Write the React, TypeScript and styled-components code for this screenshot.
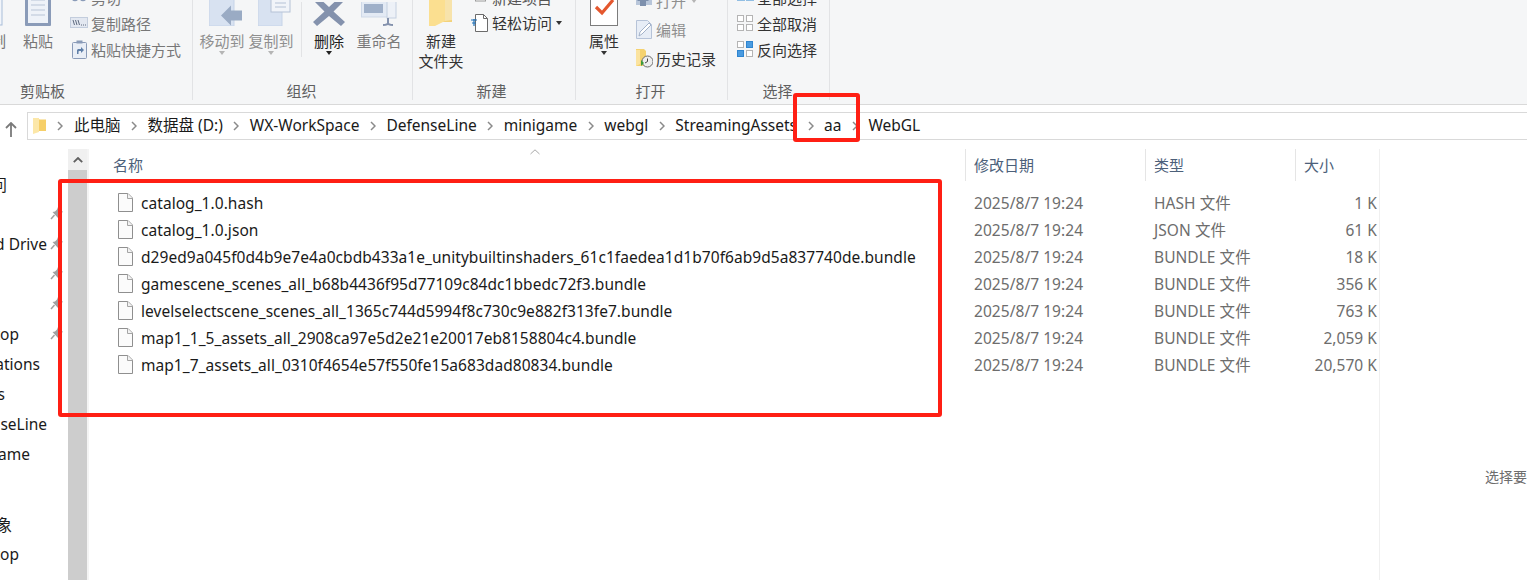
import React from "react";
import styled, { createGlobalStyle } from "styled-components";

const Global = createGlobalStyle`
  html, body { margin: 0; padding: 0; background: #fff; overflow: hidden; }
  body { font-family: "Noto Sans", "Noto Sans CJK SC", sans-serif; }
`;

const Window = styled.div`
  position: relative;
  width: 1527px;
  height: 580px;
  overflow: hidden;
  display: flex;
  flex-direction: column;
  background: #fff;
`;

/* ---------- ribbon ---------- */
const Ribbon = styled.div`
  height: 104px;
  flex: none;
  display: flex;
  align-items: flex-start;
  background: #f5f6f7;
  border-bottom: 1px solid #d9d9d9;
  overflow: hidden;
`;
const Group = styled.section<{ $w: number }>`
  width: ${(p) => p.$w}px;
  height: 100px;
  flex: none;
  box-sizing: border-box;
  display: flex;
  flex-direction: column;
  border-right: 1px solid #e2e3e5;
`;
const GroupBody = styled.div<{ $pad: number }>`
  height: 80px;
  flex: none;
  display: flex;
  align-items: flex-start;
  padding-left: ${(p) => p.$pad}px;
`;
const GroupLabel = styled.div<{ $w: number }>`
  width: ${(p) => p.$w}px;
  height: 20px;
  line-height: 22px;
  text-align: center;
  font-size: 15px;
  color: #5f5f5f;
  white-space: nowrap;
`;
const BigButton = styled.div<{ $w: number; $ml?: number }>`
  width: ${(p) => p.$w}px;
  margin-left: ${(p) => p.$ml ?? 0}px;
  flex: none;
  display: flex;
  flex-direction: column;
  align-items: center;
`;
const BigIcon = styled.div<{ $dx?: number }>`
  height: 26px;
  margin-bottom: 5px;
  margin-left: ${(p) => p.$dx ?? 0}px;
  display: flex;
  align-items: flex-end;
  overflow: hidden;
`;
const BigText = styled.div<{ $tone?: string }>`
  font-size: 15px;
  line-height: 20px;
  text-align: center;
  white-space: nowrap;
  color: ${(p) => p.$tone ?? "#777"};
`;
const Caret = styled.div<{ $tone?: string; $ml?: number }>`
  width: 0;
  height: 0;
  margin-left: ${(p) => p.$ml ?? 0}px;
  border-left: 3.5px solid transparent;
  border-right: 3.5px solid transparent;
  border-top: 4px solid ${(p) => p.$tone ?? "#333"};
`;
const Separator = styled.div`
  width: 1px;
  height: 55px;
  margin: 2px 3px 0 6px;
  flex: none;
  background: #e2e3e5;
`;
const SmallList = styled.div<{ $top: number; $ml?: number }>`
  margin-top: ${(p) => p.$top}px;
  margin-left: ${(p) => p.$ml ?? 0}px;
  display: flex;
  flex-direction: column;
`;
const SmallRow = styled.div<{ $h: number }>`
  height: ${(p) => p.$h}px;
  display: flex;
  align-items: center;
  white-space: nowrap;
`;
const SmallIcon = styled.div`
  width: 20px;
  height: 20px;
  flex: none;
  margin-right: 2px;
  display: flex;
  align-items: center;
  justify-content: center;
`;
const SmallText = styled.span<{ $tone?: string }>`
  font-size: 15px;
  color: ${(p) => p.$tone ?? "#333"};
`;

/* ---------- address bar ---------- */
const AddressBar = styled.div`
  height: 44px;
  flex: none;
  display: flex;
  align-items: flex-start;
  background: #fff;
`;
const UpButton = styled.div`
  width: 22px;
  margin-right: 5px;
  height: 44px;
  flex: none;
  display: flex;
  align-items: center;
  justify-content: center;
  box-sizing: border-box;
  padding-top: 1px;
  margin-top: 2px;
`;
const AddressBox = styled.div`
  flex: 1;
  height: 28px;
  margin-top: 7px;
  box-sizing: border-box;
  border: 1px solid #d9d9d9;
  border-right: none;
  display: flex;
  align-items: center;
  padding-left: 5px;
  font-size: 15.5px;
  color: #1a1a1a;
  white-space: nowrap;
`;
const FolderSlot = styled.div`
  width: 13px;
  height: 16px;
  flex: none;
  margin-right: 8px;
`;
const FirstSep = styled.div`
  width: 12px;
  margin-right: 8px;
  flex: none;
  display: flex;
  align-items: center;
  justify-content: center;
`;
const Crumb = styled.span`
  flex: none;
  line-height: 24px;
  margin-bottom: 2px;
`;
const CrumbSep = styled.div`
  width: 27px;
  flex: none;
  display: flex;
  align-items: center;
  justify-content: center;
`;

/* ---------- body ---------- */
const Body = styled.div`
  flex: 1;
  display: flex;
  min-height: 0;
`;
const Sidebar = styled.nav`
  width: 68px;
  flex: none;
  padding-top: 20px;
  overflow: hidden;
  font-size: 15.5px;
  color: #1a1a1a;
`;
const NavRow = styled.div<{ $h: number }>`
  height: ${(p) => p.$h}px;
  display: flex;
  align-items: center;
  position: relative;
`;
const NavLabel = styled.div<{ $end: number }>`
  width: ${(p) => p.$end}px;
  display: flex;
  justify-content: flex-end;
  overflow: hidden;
  white-space: nowrap;
`;
const NavPin = styled.div`
  position: absolute;
  left: 50px;
  top: 8px;
  width: 13px;
  height: 13px;
`;
const Scrollbar = styled.div`
  width: 19px;
  flex: none;
  display: flex;
  flex-direction: column;
  background: #f0f0f0;
`;
const ScrollButton = styled.div`
  height: 21px;
  flex: none;
  display: flex;
  align-items: center;
  justify-content: center;
`;
const ScrollThumb = styled.div`
  flex: 1;
  background: #cdcdcd;
`;
const FilePane = styled.div`
  width: 1293px;
  flex: none;
  box-sizing: border-box;
  border-left: 2px solid #f4f4f4;
  border-right: 1px solid #f0f0f0;
  position: relative;
`;
const HeaderRow = styled.div`
  display: grid;
  grid-template-columns: 876px 180px 150px 84px;
  height: 32px;
  margin-bottom: 8px;
  font-size: 15px;
  color: #4c607a;
`;
const HeaderCell = styled.div<{ $pad: number; $line?: boolean }>`
  box-sizing: border-box;
  padding-left: ${(p) => p.$pad}px;
  line-height: 32px;
  border-left: ${(p) => (p.$line ? "1px solid #e5e5e5" : "none")};
`;
const SortArrow = styled.div`
  position: absolute;
  left: 441px;
  top: 0;
`;
const FileRow = styled.div`
  display: grid;
  grid-template-columns: 876px 180px 150px 84px;
  height: 27px;
  align-items: center;
  font-size: 15.5px;
  letter-spacing: 0.05px;
`;
const NameCell = styled.div`
  display: flex;
  align-items: center;
  padding-left: 29px;
  color: #1a1a1a;
  white-space: nowrap;
  min-width: 0;
`;
const FileGlyph = styled.div`
  width: 15px;
  height: 19px;
  flex: none;
  margin-right: 8px;
`;
const MetaCell = styled.div<{ $right?: boolean }>`
  box-sizing: border-box;
  padding: ${(p) => (p.$right ? "0 2px 0 0" : "0 0 0 9px")};
  text-align: ${(p) => (p.$right ? "right" : "left")};
  color: #6d6d6d;
  white-space: nowrap;
`;
const Preview = styled.div`
  flex: 1;
  padding-left: 105px;
  padding-top: 318px;
  font-size: 14px;
  line-height: 20px;
  color: #6d6d6d;
  white-space: nowrap;
  overflow: hidden;
`;
const Highlight = styled.div<{ $x: number; $y: number; $w: number; $h: number }>`
  position: absolute;
  left: ${(p) => p.$x}px;
  top: ${(p) => p.$y}px;
  width: ${(p) => p.$w}px;
  height: ${(p) => p.$h}px;
  box-sizing: border-box;
  border: 4px solid #ff1f14;
  border-radius: 3px;
  pointer-events: none;
`;

/* ---------- icons ---------- */
const Svg: React.FC<{ w: number; h: number; children: React.ReactNode }> = ({ w, h, children }) => (
  <svg width={w} height={h} viewBox={`0 0 ${w} ${h}`} style={{ display: "block", flex: "none" }}>
    {children}
  </svg>
);

const CopyIcon = () => (
  <Svg w={24} h={26}>
    <rect x="1" y="-6" width="22" height="31" fill="#f2f5fa" stroke="#a9bdd9" />
    <path d="M5 2h14M5 7h14M5 12h14M5 17h14" stroke="#b9c6da" />
  </Svg>
);
const PasteIcon = () => (
  <Svg w={26} h={26}>
    <rect x="0" y="-6" width="26" height="32" rx="1" fill="#8a9bb8" />
    <rect x="3" y="-6" width="20" height="29" fill="#eef2f8" />
    <path d="M6 0h14M6 5h14M6 10h14M6 15h14" stroke="#b8c4d6" />
  </Svg>
);
const ScissorsIcon = () => (
  <Svg w={18} h={10}>
    <circle cx="5" cy="5" r="3.3" fill="none" stroke="#8a9bb8" strokeWidth="1.8" />
    <circle cx="13" cy="5" r="3.3" fill="none" stroke="#8a9bb8" strokeWidth="1.8" />
  </Svg>
);
const CopyPathIcon = () => (
  <Svg w={18} h={12}>
    <rect x=".5" y=".5" width="17" height="10" fill="#e3e8f1" stroke="#c3cddd" />
    <path d="M3 3l1.5 5M5.500 3L7 8M8 3l1.500 5" stroke="#5f6b80" />
    <path d="M11 8h1M13 8h1M15 8h1" stroke="#5f6b80" />
  </Svg>
);
const ShortcutIcon = () => (
  <Svg w={15} h={19}>
    <rect x=".5" y="2.5" width="14" height="16" rx="1" fill="#e9eef6" stroke="#8a9bb8" />
    <rect x="4.5" y=".5" width="6" height="3" fill="#8a9bb8" />
    <path d="M5 14v-3.5c0-1 .8-1.500 1.700-1.500H9V7l3 3-3 3v-2H7.300c-.5 0-.8.3-.8.8V14z" fill="#5f7fa8" />
  </Svg>
);
const MoveIcon = () => (
  <Svg w={33} h={26}>
    <path d="M0 -4h25v30H0z" fill="#d8e2f1" stroke="#c7d4e8" />
    <path d="M12 17l10-10v5h11v10H22v5z" transform="translate(0 -1.500)" fill="#9aabc4" />
  </Svg>
);
const CopyToIcon = () => (
  <Svg w={33} h={26}>
    <path d="M0 -4h24v30H0z" fill="#d8e2f1" stroke="#c7d4e8" />
    <rect x="13" y="-6" width="19" height="18" fill="#f1f4f9" stroke="#b5c2d6" />
    <path d="M17 -1h11M17 3h11M17 7h11" stroke="#b5c2d6" />
  </Svg>
);
const DeleteIcon = () => (
  <Svg w={32} h={24}>
    <path d="M4 -6L16 5 28 -6l4 4L20.500 9.500 32 20l-4 4L16 14 4 24l-4-4L11.500 9.500 0 -2z" fill="#8492ad" />
  </Svg>
);
const RenameIcon = () => (
  <Svg w={36} h={24}>
    <rect x=".5" y="-2" width="29" height="17" fill="#e3eaf4" stroke="#cfd9e8" />
    <rect x="3" y="2" width="19" height="9" fill="#9fb0c9" />
    <rect x="26" y="-3" width="9" height="19" fill="#edf1f7" stroke="#c4cfe0" />
    <path d="M27 16v6M22 23c3 0 5-1 5-2 0 1 2 2 5 2" fill="none" stroke="#8492ad" strokeWidth="2" />
  </Svg>
);
const BigFolderIcon = () => (
  <Svg w={25} h={26}>
    <path d="M5 -4h18v26H5z" fill="#f3d27a" />
    <path d="M0 -4h16v25l-10 5H0z" fill="#fbdf90" />
    <path d="M16 -4h7v24l-7 1z" fill="#f7e3ab" />
  </Svg>
);
const NewItemIcon = () => (
  <Svg w={14} h={8}>
    <rect x="2.500" y="-6" width="10" height="13" fill="#fff" stroke="#9a9a9a" />
    <path d="M0 1h6M0 4h6" stroke="#c0504d" />
  </Svg>
);
const EasyAccessIcon = () => (
  <Svg w={18} h={18}>
    <path d="M4.500.5h8l4 4v13h-12z" fill="#fff" stroke="#6b6b6b" />
    <path d="M12.500.5v4h4" fill="none" stroke="#6b6b6b" />
    <path d="M0 6h6M1 9h4M3 5v7" stroke="#1f6fb5" strokeWidth="1.200" fill="none" />
  </Svg>
);
const PropertiesIcon = () => (
  <Svg w={28} h={26}>
    <rect x=".5" y="-6" width="27" height="31.500" fill="#fff" stroke="#7c7c7c" />
    <path d="M6 7l6 6L23 0" fill="none" stroke="#e4572e" strokeWidth="3.200" />
  </Svg>
);
const OpenIcon = () => (
  <Svg w={17} h={12}>
    <path d="M0 -2h16v12H0z" fill="#b8c6da" />
    <path d="M4 11V6H1l6-6 6 6h-3v5z" fill="#7d90ad" />
  </Svg>
);
const EditIcon = () => (
  <Svg w={17} h={19}>
    <path d="M.5.500h11l4 4v14H.5z" fill="#e7edf6" stroke="#b6c3d8" />
    <path d="M3 16l1-4L13 3l2 2-9 9z" fill="#fff" stroke="#a3b2c9" />
  </Svg>
);
const HistoryIcon = () => (
  <Svg w={17} h={19}>
    <path d="M0 0h8l2 2v15H0z" fill="#f5d26f" />
    <path d="M0 1h4v14l-4 2z" fill="#fbe39f" />
    <circle cx="11.500" cy="12.500" r="5.500" fill="#eee" stroke="#6b6b6b" />
    <path d="M11.500 9.500v3l-2.500 1.500" fill="none" stroke="#444" />
    <path d="M5 11l3 3-3 3z" fill="#3a9a3a" />
  </Svg>
);
const Squares: React.FC<{ fill: [boolean, boolean, boolean, boolean] }> = ({ fill }) => (
  <Svg w={16} h={16}>
    {[
      [0, 0],
      [9, 0],
      [0, 9],
      [9, 9],
    ].map(([x, y], i) => (
      <rect
        key={i}
        x={x + 0.5}
        y={y + 0.5}
        width="6"
        height="6"
        fill={fill[i] ? "#4a9be0" : "#fff"}
        stroke={fill[i] ? "#2f85d0" : "#b4b4b4"}
      />
    ))}
  </Svg>
);
const SelectAllTop = () => (
  <Svg w={17} h={8}>
    <rect x=".5" y="-6" width="7" height="13" fill="#a9d3f5" stroke="#2f85d0" />
    <rect x="9.500" y="-6" width="7" height="13" fill="#a9d3f5" stroke="#2f85d0" />
  </Svg>
);
const UpArrow = () => (
  <Svg w={12} h={15}>
    <path d="M6 1v14M1 6l5-5 5 5" fill="none" stroke="#7a7a7a" strokeWidth="1.800" />
  </Svg>
);
const AddressFolder = () => (
  <Svg w={13} h={16}>
    <path d="M0 0h5l1.500 1.500H13V13H0z" fill="#f6cf68" />
    <path d="M0 0h6v14l-6 2z" fill="#fce7a8" />
  </Svg>
);
const Chevron = () => (
  <Svg w={6} h={10}>
    <path d="M1 1l4 4-4 4" fill="none" stroke="#8a8a8a" strokeWidth="1.500" />
  </Svg>
);
const PinIcon = () => (
  <Svg w={13} h={13}>
    <path d="M8 0l5 5-2 1-2.500 2.500L8 11 2.500 5 5 4.500 7 2.500z" fill="#a0a0a0" />
    <path d="M4.500 8L1 12" stroke="#a0a0a0" strokeWidth="1.500" />
  </Svg>
);
const FileIcon = () => (
  <Svg w={15} h={19}>
    <path d="M.5.500h9.500l4.500 4.500v13.500H.5z" fill="#fbfbfb" stroke="#8f8f8f" />
    <path d="M9.500.500v5h5" fill="#f2f2f2" stroke="#a5a5a5" />
  </Svg>
);
const ScrollUp = () => (
  <Svg w={10} h={6}>
    <path d="M.8 5.200L5 1l4.200 4.200" fill="none" stroke="#606060" strokeWidth="1.800" />
  </Svg>
);
const SortUp = () => (
  <Svg w={10} h={6}>
    <path d="M.5 5L5 .8 9.500 5" fill="none" stroke="#a8a8a8" />
  </Svg>
);

/* ---------- data ---------- */
const crumbs = [
  "此电脑",
  "数据盘 (D:)",
  "WX-WorkSpace",
  "DefenseLine",
  "minigame",
  "webgl",
  "StreamingAssets",
  "aa",
  "WebGL",
];
const navItems: { text: string; end: number; pin?: boolean; h?: number }[] = [
  { text: "快速访问", end: 7 },
  { text: "", end: 0, pin: true },
  { text: "Cloud Drive", end: 47, pin: true },
  { text: "", end: 0, pin: true },
  { text: "", end: 0, pin: true },
  { text: "Desktop", end: 19, pin: true },
  { text: "Applications", end: 40 },
  { text: "Assets", end: 5 },
  { text: "DefenseLine", end: 47 },
  { text: "minigame", end: 30 },
  { text: "", end: 0, h: 40 },
  { text: "3D 对象", end: 12 },
  { text: "Desktop", end: 19 },
];
const files = [
  ["catalog_1.0.hash", "HASH 文件", "1 K"],
  ["catalog_1.0.json", "JSON 文件", "61 K"],
  ["d29ed9a045f0d4b9e7e4a0cbdb433a1e_unitybuiltinshaders_61c1faedea1d1b70f6ab9d5a837740de.bundle", "BUNDLE 文件", "18 K"],
  ["gamescene_scenes_all_b68b4436f95d77109c84dc1bbedc72f3.bundle", "BUNDLE 文件", "356 K"],
  ["levelselectscene_scenes_all_1365c744d5994f8c730c9e882f313fe7.bundle", "BUNDLE 文件", "763 K"],
  ["map1_1_5_assets_all_2908ca97e5d2e21e20017eb8158804c4.bundle", "BUNDLE 文件", "2,059 K"],
  ["map1_7_assets_all_0310f4654e57f550fe15a683dad80834.bundle", "BUNDLE 文件", "20,570 K"],
];

export default function App() {
  return (
    <Window>
      <Global />
      <Ribbon>
        <Group $w={193}>
          <GroupBody $pad={0}>
            <BigButton $w={40} $ml={-29}>
              <BigIcon><CopyIcon /></BigIcon>
              <BigText>复制</BigText>
            </BigButton>
            <BigButton $w={40} $ml={7}>
              <BigIcon><PasteIcon /></BigIcon>
              <BigText>粘贴</BigText>
            </BigButton>
            <SmallList $top={-16} $ml={11}>
              <SmallRow $h={26}><SmallIcon><ScissorsIcon /></SmallIcon><SmallText $tone="#777">剪切</SmallText></SmallRow>
              <SmallRow $h={26}><SmallIcon><CopyPathIcon /></SmallIcon><SmallText $tone="#777">复制路径</SmallText></SmallRow>
              <SmallRow $h={26}><SmallIcon><ShortcutIcon /></SmallIcon><SmallText $tone="#777">粘贴快捷方式</SmallText></SmallRow>
            </SmallList>
          </GroupBody>
          <GroupLabel $w={85}>剪贴板</GroupLabel>
        </Group>
        <Group $w={220}>
          <GroupBody $pad={5}>
            <BigButton $w={48}>
              <BigIcon $dx={6}><MoveIcon /></BigIcon>
              <BigText $tone="#8f8f8f">移动到</BigText>
              <Caret $tone="#b5b5b5" />
            </BigButton>
            <BigButton $w={48} $ml={1}>
              <BigIcon $dx={6}><CopyToIcon /></BigIcon>
              <BigText $tone="#8f8f8f">复制到</BigText>
              <Caret $tone="#b5b5b5" />
            </BigButton>
            <Separator />
            <BigButton $w={48}>
              <BigIcon><DeleteIcon /></BigIcon>
              <BigText $tone="#222">删除</BigText>
              <Caret $tone="#222" />
            </BigButton>
            <BigButton $w={50} $ml={1}>
              <BigIcon><RenameIcon /></BigIcon>
              <BigText $tone="#7a7a7a">重命名</BigText>
            </BigButton>
          </GroupBody>
          <GroupLabel $w={217}>组织</GroupLabel>
        </Group>
        <Group $w={163}>
          <GroupBody $pad={4}>
            <BigButton $w={48}>
              <BigIcon><BigFolderIcon /></BigIcon>
              <BigText $tone="#333">新建</BigText>
              <BigText $tone="#333">文件夹</BigText>
            </BigButton>
            <SmallList $top={-15} $ml={5}>
              <SmallRow $h={25}><SmallIcon><NewItemIcon /></SmallIcon><SmallText $tone="#555">新建项目</SmallText></SmallRow>
              <SmallRow $h={25}>
                <SmallIcon><EasyAccessIcon /></SmallIcon>
                <SmallText>轻松访问</SmallText>
                <Caret $ml={4} />
              </SmallRow>
            </SmallList>
          </GroupBody>
          <GroupLabel $w={157}>新建</GroupLabel>
        </Group>
        <Group $w={152}>
          <GroupBody $pad={4}>
            <BigButton $w={48}>
              <BigIcon><PropertiesIcon /></BigIcon>
              <BigText $tone="#333">属性</BigText>
              <Caret />
            </BigButton>
            <SmallList $top={-14} $ml={6}>
              <SmallRow $h={29}>
                <SmallIcon><OpenIcon /></SmallIcon>
                <SmallText $tone="#8f8f8f">打开</SmallText>
                <Caret $ml={5} $tone="#b5b5b5" />
              </SmallRow>
              <SmallRow $h={29}><SmallIcon><EditIcon /></SmallIcon><SmallText $tone="#8f8f8f">编辑</SmallText></SmallRow>
              <SmallRow $h={29}><SmallIcon><HistoryIcon /></SmallIcon><SmallText>历史记录</SmallText></SmallRow>
            </SmallList>
          </GroupBody>
          <GroupLabel $w={149}>打开</GroupLabel>
        </Group>
        <Group $w={102}>
          <GroupBody $pad={7}>
            <SmallList $top={-16}>
              <SmallRow $h={26}><SmallIcon><SelectAllTop /></SmallIcon><SmallText>全部选择</SmallText></SmallRow>
              <SmallRow $h={26}><SmallIcon><Squares fill={[false, false, false, false]} /></SmallIcon><SmallText>全部取消</SmallText></SmallRow>
              <SmallRow $h={26}><SmallIcon><Squares fill={[false, true, true, false]} /></SmallIcon><SmallText>反向选择</SmallText></SmallRow>
            </SmallList>
          </GroupBody>
          <GroupLabel $w={99}>选择</GroupLabel>
        </Group>
      </Ribbon>

      <AddressBar>
        <UpButton><UpArrow /></UpButton>
        <AddressBox>
          <FolderSlot><AddressFolder /></FolderSlot>
          <FirstSep><Chevron /></FirstSep>
          {crumbs.map((c, i) => (
            <React.Fragment key={c}>
              <Crumb>{c}</Crumb>
              {i < crumbs.length - 1 && <CrumbSep><Chevron /></CrumbSep>}
            </React.Fragment>
          ))}
        </AddressBox>
      </AddressBar>

      <Body>
        <Sidebar>
          {navItems.map((n, i) => (
            <NavRow key={i} $h={n.h ?? 30}>
              {n.text && <NavLabel $end={n.end}>{n.text}</NavLabel>}
              {n.pin && <NavPin><PinIcon /></NavPin>}
            </NavRow>
          ))}
        </Sidebar>
        <Scrollbar>
          <ScrollButton><ScrollUp /></ScrollButton>
          <ScrollThumb />
        </Scrollbar>
        <FilePane>
          <SortArrow><SortUp /></SortArrow>
          <HeaderRow>
            <HeaderCell $pad={24}>名称</HeaderCell>
            <HeaderCell $pad={8} $line>修改日期</HeaderCell>
            <HeaderCell $pad={8} $line>类型</HeaderCell>
            <HeaderCell $pad={8} $line>大小</HeaderCell>
          </HeaderRow>
          {files.map(([name, type, size]) => (
            <FileRow key={name}>
              <NameCell><FileGlyph><FileIcon /></FileGlyph>{name}</NameCell>
              <MetaCell>2025/8/7 19:24</MetaCell>
              <MetaCell>{type}</MetaCell>
              <MetaCell $right>{size}</MetaCell>
            </FileRow>
          ))}
        </FilePane>
        <Preview>选择要预览的文件。</Preview>
      </Body>

      <Highlight $x={793} $y={93} $w={67} $h={49} />
      <Highlight $x={58} $y={179} $w={884} $h={238} />
    </Window>
  );
}
